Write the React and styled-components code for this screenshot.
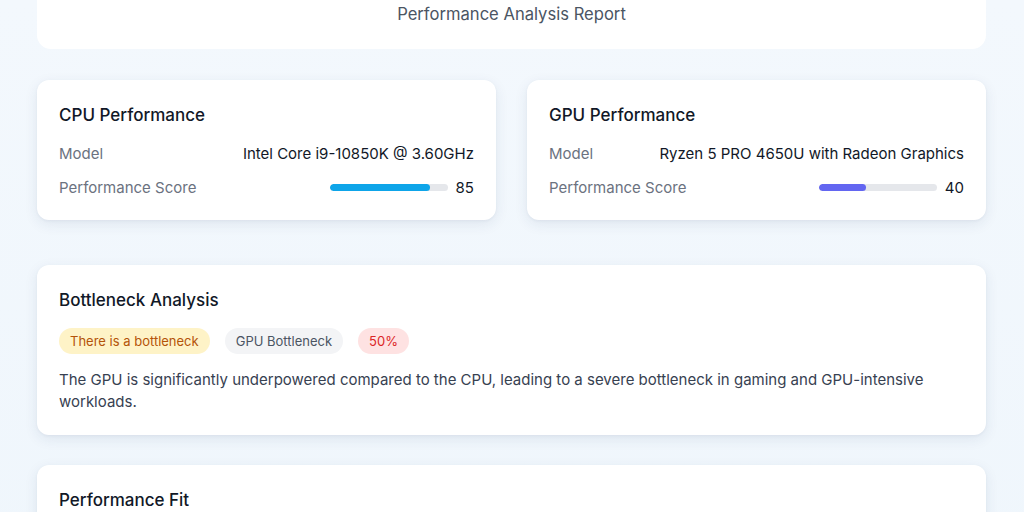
import React from "react";
import styled, { createGlobalStyle } from "styled-components";

const GlobalStyle = createGlobalStyle`
  html, body {
    margin: 0;
    padding: 0;
    background: #f1f7fd;
    font-family: "Inter", "Noto Sans", sans-serif;
    -webkit-font-smoothing: antialiased;
  }
`;

const Page = styled.div`
  min-height: 512px;
  padding: 0 38px 40px 37px;
  display: flex;
  flex-direction: column;
  background: linear-gradient(180deg, #f3f8fd, #eff6fc);
`;

const HeaderCard = styled.div`
  background: #fff;
  border-radius: 0 0 14px 14px;
  padding: 4px 24px 25px;
  text-align: center;
  margin-bottom: 31px;
`;

const Subtitle = styled.div`
  font-size: 16.6px;
  line-height: 20px;
  color: #4b5563;
`;

const Grid = styled.div`
  display: grid;
  grid-template-columns: 1fr 1fr;
  gap: 31px;
  margin-bottom: 45px;
`;

const Card = styled.div`
  background: #fff;
  border-radius: 12px;
  padding: 25px 22px ${(p) => p.$pb || 22}px;
  box-shadow: 0 4px 14px rgba(30, 60, 100, 0.09), 0 1px 3px rgba(30, 60, 100, 0.05);
  margin-bottom: ${(p) => p.$mb || 0}px;
`;

const CardTitle = styled.div`
  font-size: 17px;
  line-height: 20px;
  font-weight: 500;
  color: #111827;
  margin-bottom: ${(p) => p.$mb || 18}px;
`;

const Row = styled.div`
  display: flex;
  justify-content: space-between;
  align-items: center;
  height: 20px;
  & + & {
    margin-top: 14px;
  }
`;

const Label = styled.span`
  font-size: 15px;
  color: #6b7280;
`;

const Value = styled.span`
  font-size: 15px;
  color: #111827;
`;

const ScoreWrap = styled.div`
  display: flex;
  align-items: center;
  gap: 8px;
`;

const Track = styled.div`
  width: 118px;
  height: 7px;
  border-radius: 4px;
  background: #e5e7eb;
  overflow: hidden;
`;

const Fill = styled.div`
  height: 100%;
  border-radius: 4px;
  background: ${(p) => p.$color};
`;

const Badges = styled.div`
  display: flex;
  gap: 15px;
  margin-bottom: 15px;
`;

const Badge = styled.span`
  display: inline-flex;
  align-items: center;
  height: 26px;
  padding: 0 11px;
  border-radius: 13px;
  font-size: 13px;
  background: ${(p) => p.$bg};
  color: ${(p) => p.$fg};
`;

const Text = styled.p`
  margin: 0;
  font-size: 15px;
  line-height: 22px;
  color: #374151;
`;

function PerfCard({ title, model, score, color }) {
  return (
    <Card $pb={23}>
      <CardTitle>{title}</CardTitle>
      <Row>
        <Label>Model</Label>
        <Value>{model}</Value>
      </Row>
      <Row>
        <Label>Performance Score</Label>
        <ScoreWrap>
          <Track>
            <Fill $color={color} style={{ width: `${score}%` }} />
          </Track>
          <Value>{score}</Value>
        </ScoreWrap>
      </Row>
    </Card>
  );
}

export default function App() {
  return (
    <>
      <GlobalStyle />
      <Page>
        <HeaderCard>
          <Subtitle>Performance Analysis Report</Subtitle>
        </HeaderCard>
        <Grid>
          <PerfCard
            title="CPU Performance"
            model="Intel Core i9-10850K @ 3.60GHz"
            score={85}
            color="#0ea5e9"
          />
          <PerfCard
            title="GPU Performance"
            model="Ryzen 5 PRO 4650U with Radeon Graphics"
            score={40}
            color="#6366f1"
          />
        </Grid>
        <Card $mb={30}>
          <CardTitle>Bottleneck Analysis</CardTitle>
          <Badges>
            <Badge $bg="#fef3c7" $fg="#b45309">There is a bottleneck</Badge>
            <Badge $bg="#f3f4f6" $fg="#4b5563">GPU Bottleneck</Badge>
            <Badge $bg="#fee2e2" $fg="#dc2626">50%</Badge>
          </Badges>
          <Text>
            The GPU is significantly underpowered compared to the CPU, leading to a
            severe bottleneck in gaming and GPU-intensive workloads.
          </Text>
        </Card>
        <Card>
          <CardTitle>Performance Fit</CardTitle>
          <Text>&nbsp;</Text>
        </Card>
      </Page>
    </>
  );
}
